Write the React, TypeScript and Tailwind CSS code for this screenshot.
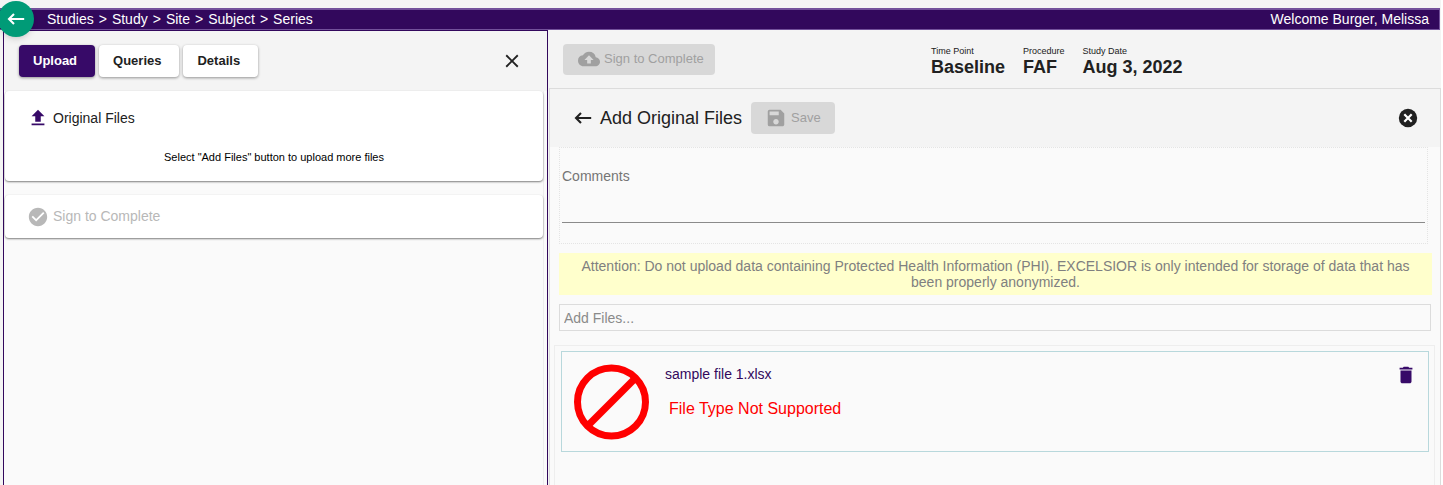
import React from 'react';
import {
  MdCheckCircle,
  MdClose,
  MdCloudUpload,
  MdDelete,
  MdFileUpload,
  MdSave,
} from 'react-icons/md';

const BREADCRUMBS = ['Studies', 'Study', 'Site', 'Subject', 'Series'];

const TABS = ['Upload', 'Queries', 'Details'];

const STUDY_INFO = [
  { label: 'Time Point', value: 'Baseline' },
  { label: 'Procedure', value: 'FAF' },
  { label: 'Study Date', value: 'Aug 3, 2022' },
];

const FILES = [{ name: 'sample file 1.xlsx', error: 'File Type Not Supported' }];

const BackArrowIcon: React.FC = () => (
  <svg
    viewBox="0 0 22 22"
    className="w-[22px] h-[22px]"
    fill="none"
    stroke="currentColor"
    strokeWidth="2.1"
    aria-hidden="true"
  >
    <path d="M19.2 11H4M9 6 4 11 9 16" />
  </svg>
);

const ProhibitedIcon: React.FC = () => (
  <svg viewBox="0 0 76 76" className="w-19 h-19 shrink-0" fill="none" stroke="#ff0000" strokeWidth="7" aria-hidden="true">
    <circle cx="38.5" cy="38" r="34" />
    <path d="M14.5 62 62.5 14" />
  </svg>
);

const CancelIcon: React.FC = () => (
  <svg viewBox="0 0 22 22" className="w-[22px] h-[22px]" aria-hidden="true">
    <circle cx="11" cy="11" r="9.2" fill="#212121" />
    <path d="M7.3 7.3 14.7 14.7M14.7 7.3 7.3 14.7" stroke="#fff" strokeWidth="2.2" />
  </svg>
);

const Header: React.FC = () => (
  <header className="relative pt-2 mr-px">
    <div className="flex items-center justify-between h-[22px] pl-[47px] pr-2.5 bg-[#32085c] border-t-2 border-b border-r border-[#73519b] text-white text-[14px]">
      <nav aria-label="Breadcrumb" className="flex gap-[5px]">
        {BREADCRUMBS.map((crumb, idx) => (
          <React.Fragment key={crumb}>
            {idx > 0 && <span>&gt;</span>}
            <a href="#">{crumb}</a>
          </React.Fragment>
        ))}
      </nav>
      <span>Welcome Burger, Melissa</span>
    </div>
    <button
      aria-label="Back"
      className="absolute -left-0.5 top-px z-10 flex items-center justify-center w-9 h-9 rounded-full bg-[#009b77] text-white shadow-md"
    >
      <BackArrowIcon />
    </button>
  </header>
);

const SidePanel: React.FC = () => (
  <aside className="flex flex-col w-[545px] shrink-0 ml-[3px] border border-b-0 border-[#32085c] bg-[#fafafa]">
    <div className="flex items-center justify-between h-[60px] pl-[15px] pr-6 bg-[#f4f4f4]">
      <div className="flex gap-1">
        {TABS.map((tab, idx) => (
          <button
            key={tab}
            className={`h-8 pl-3.5 pr-[18px] rounded text-[13px] font-bold shadow-[0_1px_3px_rgba(0,0,0,0.4)] ${
              idx === 0 ? 'bg-[#370a68] text-white' : 'bg-white text-[#212121]'
            }`}
          >
            {tab}
          </button>
        ))}
      </div>
      <button aria-label="Close" className="text-[#212121]">
        <MdClose size={22} />
      </button>
    </div>

    <div className="flex flex-col flex-1 gap-3.5 mr-[3px] pl-px border-r border-[#ececec]">
      <section className="h-[90px] pt-4 px-[22px] bg-white rounded shadow-[0_1px_2px_rgba(0,0,0,0.5)]">
        <h2 className="flex items-center gap-1 h-[22px] text-[14px] text-[#212121]">
          <MdFileUpload size={22} className="text-[#370a68]" />
          Original Files
        </h2>
        <p className="mt-5 text-center text-[11px] leading-4 text-black">Select "Add Files" button to upload more files</p>
      </section>
      <section className="flex items-center gap-1 h-[43px] pl-[22px] bg-white rounded shadow-[0_1px_2px_rgba(0,0,0,0.5)] text-[14px] text-[#b8b8b8]">
        <MdCheckCircle size={22} />
        Sign to Complete
      </section>
    </div>
  </aside>
);

const StudyBar: React.FC = () => (
  <div className="flex h-[58px] pl-3.5">
    <div className="w-[368px] pt-3.5">
      <button
        disabled
        className="flex items-center gap-1 h-[31px] pl-[15px] pr-[11px] pb-0.5 rounded bg-[#d8d8d8] text-[#a0a0a0] text-[13px]"
      >
        <MdCloudUpload size={22} />
        Sign to Complete
      </button>
    </div>
    <dl className="flex gap-[18px] pt-4 text-[#212121]">
      {STUDY_INFO.map((info) => (
        <div key={info.label}>
          <dt className="text-[9px] leading-[10px]">{info.label}</dt>
          <dd className="text-[18px] leading-[22px] font-bold">{info.value}</dd>
        </div>
      ))}
    </dl>
  </div>
);

const UploadPanel: React.FC = () => (
  <section className="flex flex-col flex-1 border-t border-x border-[#dcdcdc] bg-[#fafafa]">
    <div className="flex items-center justify-between h-[58px] pl-[22px] pr-[21px] bg-[#f4f4f4] text-[#212121]">
      <div className="flex items-center">
        <button aria-label="Go back">
          <BackArrowIcon />
        </button>
        <h1 className="ml-1.5 text-[18px]">Add Original Files</h1>
        <button
          disabled
          className="flex items-center gap-1 h-8 ml-[9px] px-3.5 rounded bg-[#d8d8d8] text-[#a0a0a0] text-[13px]"
        >
          <MdSave size={22} />
          Save
        </button>
      </div>
      <button aria-label="Cancel">
        <CancelIcon />
      </button>
    </div>

    <div className="flex flex-col h-[97px] ml-[9px] mr-3 px-0.5 pt-5 border border-dotted border-[#e4e4e4]">
      <label htmlFor="comments" className="text-[14px] leading-4 text-[#757575]">
        Comments
      </label>
      <textarea id="comments" className="h-[39px] resize-none border-b border-[#8a8a8a] outline-none text-[14px]" />
    </div>

    <p className="mt-[9px] ml-[9px] mr-2 px-2 pt-[5px] h-[42px] bg-[#ffffcc] text-center text-[14px] leading-4 text-[#808080]">
      Attention: Do not upload data containing Protected Health Information (PHI). EXCELSIOR is only intended for
      storage of data that has been properly anonymized.
    </p>

    <input
      type="text"
      aria-label="Add Files"
      placeholder="Add Files..."
      className="mt-[9px] mx-[9px] px-1 h-[27px] border border-[#dcdcdc] bg-transparent text-[14px] placeholder:text-[#8a8a8a]"
    />

    <ul className="flex-1 mt-3.5 ml-1 mr-[5px] pt-[5px] pl-1.5 pr-[5px] border-t border-x border-[#eeeeee]">
      {FILES.map((file) => (
        <li key={file.name} className="flex items-start h-[101px] px-[11px] pt-3 border border-[#b8d8dc]">
          <ProhibitedIcon />
          <div className="flex-1 ml-4 pt-0.5">
            <p className="text-[14px] leading-4 text-[#32085c]">{file.name}</p>
            <p className="mt-4 ml-1 text-[16px] leading-[22px] text-[#ff0000]">{file.error}</p>
          </div>
          <button aria-label={`Delete ${file.name}`} className="text-[#370a68]">
            <MdDelete size={22} />
          </button>
        </li>
      ))}
    </ul>
  </section>
);

const App: React.FC = () => {
  return (
    <div className="min-h-screen pr-0.5 bg-white font-['Liberation_Sans',Arial,sans-serif]">
      <div className="flex flex-col min-h-screen bg-[#f4f4f4]">
        <Header />
        <div className="flex flex-1">
          <SidePanel />
          <main className="flex flex-col flex-1 min-w-0 ml-px">
            <StudyBar />
            <UploadPanel />
          </main>
        </div>
      </div>
    </div>
  );
};

export default App;
